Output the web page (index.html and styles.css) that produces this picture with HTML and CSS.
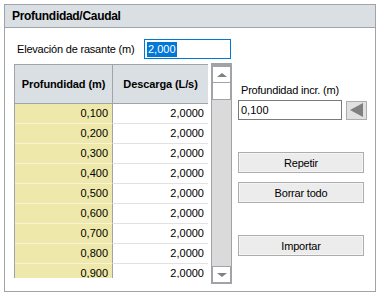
FILE: index.html
```html
<!DOCTYPE html>
<html lang="es">
<head>
    <meta charset="UTF-8">
    <title>Profundidad/Caudal</title>
    <link rel="stylesheet" href="styles.css">
</head>
<body>

<div class="panel">
    <div class="panel-title">Profundidad/Caudal</div>
    <div class="panel-body">
        <div class="elev-row">
            <label class="elev-label">Elevación de rasante (m)</label>
            <div class="elev-input"><span class="sel">2,000</span></div>
        </div>

        <div class="main-row">
            <div class="grid">
                <div class="grid-head">
                    <div class="hcell col-a">Profundidad (m)</div>
                    <div class="hcell col-b">Descarga (L/s)</div>
                </div>
                <div class="grid-row"><div class="cell col-a">0,100</div><div class="cell col-b">2,0000</div></div>
                <div class="grid-row"><div class="cell col-a">0,200</div><div class="cell col-b">2,0000</div></div>
                <div class="grid-row"><div class="cell col-a">0,300</div><div class="cell col-b">2,0000</div></div>
                <div class="grid-row"><div class="cell col-a">0,400</div><div class="cell col-b">2,0000</div></div>
                <div class="grid-row"><div class="cell col-a">0,500</div><div class="cell col-b">2,0000</div></div>
                <div class="grid-row"><div class="cell col-a">0,600</div><div class="cell col-b">2,0000</div></div>
                <div class="grid-row"><div class="cell col-a">0,700</div><div class="cell col-b">2,0000</div></div>
                <div class="grid-row"><div class="cell col-a">0,800</div><div class="cell col-b">2,0000</div></div>
                <div class="grid-row"><div class="cell col-a">0,900</div><div class="cell col-b">2,0000</div></div>
            </div>

            <div class="vscroll">
                <div class="sb-btn sb-up"><span class="tri-up"></span></div>
                <div class="sb-thumb"></div>
                <div class="sb-track"></div>
                <div class="sb-btn sb-down"><span class="tri-down"></span></div>
            </div>

            <div class="side">
                <label class="incr-label">Profundidad incr. (m)</label>
                <div class="incr-row">
                    <div class="incr-input">0,100</div>
                    <div class="arrow-btn"><span class="tri-left"></span></div>
                </div>
                <button class="btn btn-first">Repetir</button>
                <button class="btn">Borrar todo</button>
                <button class="btn btn-import">Importar</button>
            </div>
        </div>
    </div>
</div>

</body>
</html>
```

FILE: styles.css
```css
* {
    margin: 0;
    padding: 0;
    box-sizing: border-box;
}

body {
    font-family: "Liberation Sans", Arial, sans-serif;
    font-size: 11px;
    color: #000;
    background-color: #fff;
}

.panel {
    margin: 4px 0 0 4px;
    width: 372px;
    height: 288px;
    border: 1px solid #a0a4a8;
}

.panel-title {
    height: 23px;
    padding-left: 7px;
    line-height: 22px;
    font-size: 12px;
    font-weight: bold;
    letter-spacing: -0.3px;
    background-color: #dadfe3;
    border-bottom: 1px solid #a0a4a8;
}

.panel-body {
    padding: 11px 0 0 9px;
}

.elev-row {
    display: flex;
    align-items: center;
    height: 20px;
}

.elev-label {
    width: 130px;
    padding-left: 3px;
    letter-spacing: -0.2px;
}

.elev-input {
    width: 87px;
    height: 20px;
    border: 1px solid #0078d7;
    padding: 2px 0 0 2px;
}

.sel {
    display: inline-block;
    background-color: #0078d7;
    color: #fff;
    height: 15px;
    line-height: 15px;
    padding: 0 1px;
}

.main-row {
    display: flex;
    align-items: flex-start;
    margin-top: 5px;
}

.grid {
    width: 194px;
    height: 214px;
    overflow: hidden;
    border-left: 1px solid #a0a4a8;
    border-top: 1px solid #a0a4a8;
}

.grid-head {
    display: flex;
    height: 39px;
    background-color: #dadfe3;
    border-bottom: 1px solid #a0a4a8;
}

.hcell {
    display: flex;
    align-items: center;
    justify-content: center;
    font-weight: bold;
    font-size: 11px;
    letter-spacing: -0.1px;
}

.col-a {
    width: 98px;
    border-right: 1px solid #a0a4a8;
}

.col-b {
    width: 95px;
}

.grid-row {
    display: flex;
    height: 20px;
}

.cell {
    line-height: 19px;
    text-align: right;
    padding-right: 4px;
    border-bottom: 1px solid #dfe3e8;
}

.cell.col-a {
    background-color: #eee8aa;
    border-bottom-color: #f6f3d8;
}

.cell.col-b {
    background-color: #fff;
}

.vscroll {
    display: flex;
    flex-direction: column;
    width: 21px;
    height: 221px;
    margin-left: 3px;
    margin-top: -1px;
    border: 1px solid #a0a4a8;
    border-top-width: 3px;
    background-color: #dadada;
}

.sb-btn {
    height: 17px;
    background-color: #fff;
    border: 1px solid #a0a4a8;
    display: flex;
    align-items: center;
    justify-content: center;
}

.sb-thumb {
    height: 17px;
    background-color: #fff;
    border: 1px solid #a0a4a8;
    border-top: none;
}

.sb-track {
    flex: 1;
}

.tri-up {
    border-left: 5px solid transparent;
    border-right: 5px solid transparent;
    border-bottom: 4px solid #808080;
}

.tri-down {
    border-left: 5px solid transparent;
    border-right: 5px solid transparent;
    border-top: 4px solid #808080;
}

.side {
    display: flex;
    flex-direction: column;
    width: 130px;
    margin-left: 6px;
    padding-top: 20px;
}

.incr-label {
    padding-left: 3px;
    height: 16px;
    letter-spacing: -0.2px;
}

.incr-row {
    display: flex;
    align-items: center;
    gap: 4px;
}

.incr-input {
    width: 104px;
    height: 20px;
    border: 1px solid #7a7a7a;
    padding: 3px 0 0 2px;
}

.arrow-btn {
    width: 21px;
    height: 19px;
    background-color: #e1e1e1;
    border: 1px solid #adadad;
    display: flex;
    align-items: center;
    justify-content: center;
}

.tri-left {
    border-top: 7px solid transparent;
    border-bottom: 7px solid transparent;
    border-right: 13px solid #808080;
}

.btn {
    width: 126px;
    height: 21px;
    margin-top: 9px;
    font-family: "Liberation Sans", Arial, sans-serif;
    font-size: 11px;
    letter-spacing: -0.2px;
    color: #000;
    background-color: #ececec;
    border: 1px solid #adadad;
    box-shadow: inset 0 0 0 1px #f5f5f5;
}

.btn-first {
    margin-top: 32px;
}

.btn-import {
    margin-top: 32px;
}
```
